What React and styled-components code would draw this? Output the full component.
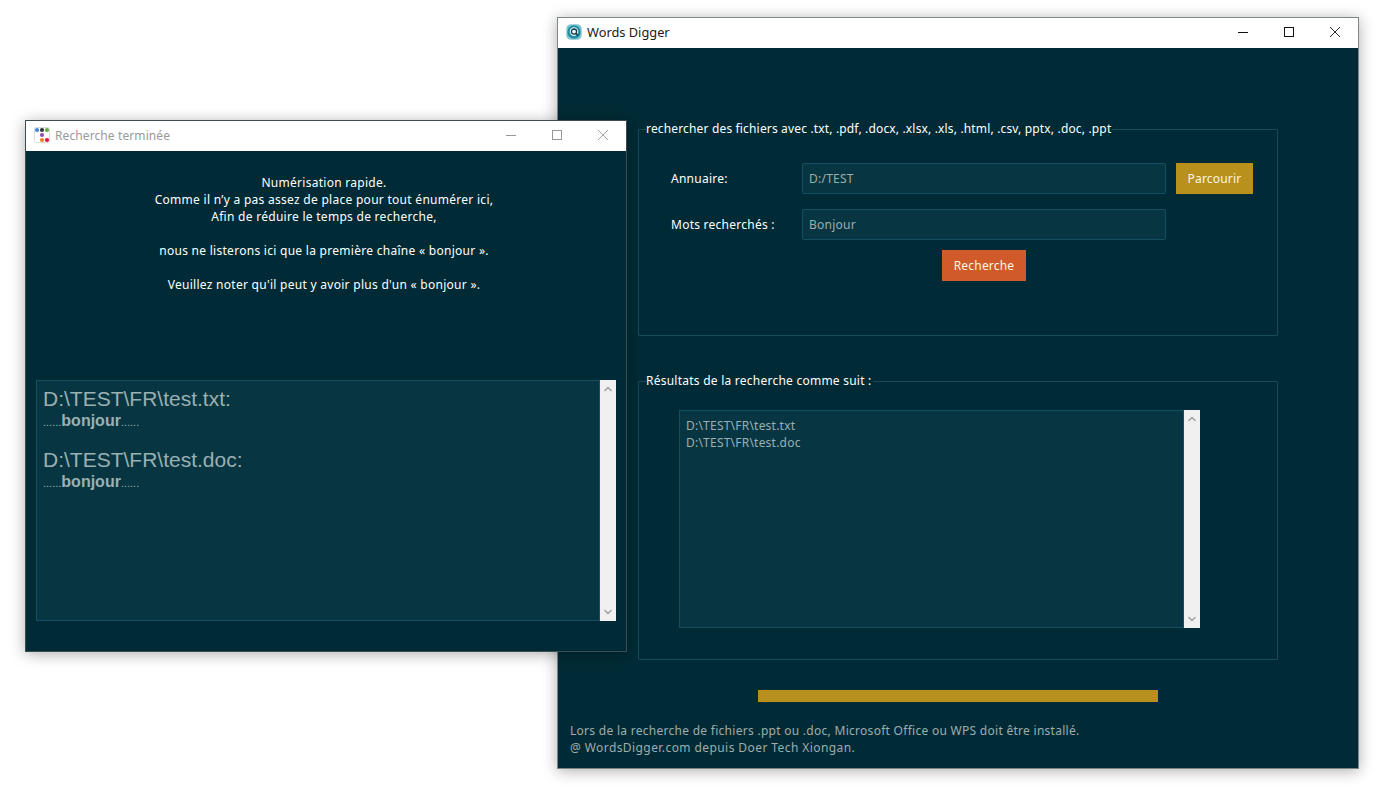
import styled, { createGlobalStyle } from "styled-components";
import { ChevronUp, ChevronDown } from "lucide-react";

const GlobalStyle = createGlobalStyle`
  html, body {
    margin: 0;
    background: #fff;
    overflow: hidden;
  }
  * {
    box-sizing: border-box;
  }
`;

const Desktop = styled.div`
  position: relative;
  width: 1384px;
  height: 789px;
  font-family: "Noto Sans", "Noto Sans CJK SC", sans-serif;
  font-size: 12px;
`;

// windows sit on a free desktop, so these are the only absolute parts
const Window = styled.div`
  position: absolute;
  left: ${(p) => p.$x}px;
  top: ${(p) => p.$y}px;
  width: ${(p) => p.$w}px;
  height: ${(p) => p.$h}px;
  display: flex;
  flex-direction: column;
  border: 1px solid ${(p) => p.$edge};
  box-shadow: 0 2px 14px rgba(0, 0, 0, 0.32);
`;

const TitleBar = styled.div`
  height: 30px;
  flex: none;
  display: flex;
  align-items: center;
  background: #fff;
  padding: 0 0 2px 8px;
  color: ${(p) => (p.$dim ? "#999999" : "#1a1a1a")};
  font-size: ${(p) => (p.$dim ? "12px" : "12.8px")};
  letter-spacing: ${(p) => (p.$dim ? "0.1px" : "0")};
`;

const TitleText = styled.span`
  margin-left: 5px;
  flex: 1;
`;

const WinBtn = styled.div`
  width: 46px;
  height: 28px;
  display: flex;
  align-items: center;
  justify-content: center;
  color: ${(p) => (p.$dim ? "#999999" : "#111111")};
`;

const Body = styled.div`
  flex: 1;
  background: #002b36;
  display: flex;
  flex-direction: column;
`;

const MainBody = styled(Body)`
  padding: 72px 80px 0 80px;
`;

const Group = styled.fieldset`
  margin: 0 0 ${(p) => p.$after || 0}px;
  padding: 0;
  width: 640px;
  height: ${(p) => p.$h}px;
  border: 1px solid #174b5a;
  border-radius: 1px;
`;

const GroupTitle = styled.legend`
  margin-left: 7px;
  padding: 0 1px 2px 0;
  color: #ffffff;
  font-size: 12px;
  line-height: 17px;
  letter-spacing: ${(p) => p.$track}px;
`;

const FormGrid = styled.div`
  display: grid;
  grid-template-columns: 131px 364px 77px;
  grid-auto-rows: 31px;
  column-gap: 0;
  row-gap: 15px;
  padding: 24px 0 0 32px;
  align-items: center;
`;

const Label = styled.div`
  color: #ffffff;
  font-size: 12px;
  letter-spacing: 0.25px;
`;

const Field = styled.div`
  height: 31px;
  line-height: 29px;
  padding-left: 6px;
  background: #073642;
  border: 1px solid #12505f;
  border-radius: 2px;
  color: #9fadad;
  font-size: 12px;
  letter-spacing: 0.25px;
`;

const Button = styled.div`
  height: 31px;
  display: flex;
  align-items: center;
  justify-content: center;
  width: ${(p) => p.$w}px;
  background: ${(p) => p.$bg};
  color: #fdf6e3;
  font-size: 12px;
  letter-spacing: 0.2px;
`;

const BrowseButton = styled(Button)`
  margin-left: 10px;
`;

const SearchRow = styled.div`
  display: flex;
  justify-content: center;
  margin: 10px 0 0 52px;
`;

const ListFrame = styled.div`
  display: flex;
  height: ${(p) => p.$h}px;
  margin: ${(p) => p.$margin};
`;

const ListBox = styled.div`
  flex: 1;
  background: #073642;
  border: 1px solid #12505f;
  color: #9ab0b2;
  padding: ${(p) => p.$pad};
  font-size: 12px;
  line-height: 17px;
  letter-spacing: 0.22px;
`;

const ScrollBar = styled.div`
  width: 16px;
  flex: none;
  background: #f0f0f0;
  color: #a3a3a3;
  display: flex;
  flex-direction: column;
  justify-content: space-between;
  align-items: center;
  padding: 3px 0;
`;

const Progress = styled.div`
  width: 400px;
  height: 12px;
  flex: none;
  margin: 30px 0 0 120px;
  background: #b8901c;
`;

const Footer = styled.div`
  margin: 20px 0 0 -68px;
  color: #9fadad;
  font-size: 12px;
  line-height: 17px;
  white-space: nowrap;
`;

const FooterLine = styled.div`
  letter-spacing: ${(p) => p.$track}px;
`;

const Notice = styled.div`
  padding: 23px 4px 0 0;
  height: 229px;
  flex: none;
  text-align: center;
  color: #ffffff;
  font-size: 12px;
  line-height: 17px;
  letter-spacing: 0.28px;
  white-space: pre-line;
`;

const ResultTitle = styled.div`
  font-family: "Liberation Sans", Arial, sans-serif;
  font-size: 21px;
  line-height: 24px;
  letter-spacing: 0;
`;

const ResultLine = styled.div`
  font-family: "Liberation Sans", Arial, sans-serif;
  font-size: 11px;
  line-height: 16px;
  letter-spacing: 0;
  padding-top: 2px;
  margin-bottom: 18px;
  b {
    font-size: 16px;
  }
`;

const WordsDiggerIcon = () => (
  <svg width="16" height="16" viewBox="0 0 16 16">
    <rect x="0.3" y="0.3" width="15.4" height="15.4" rx="4.5" fill="#86c6d1" />
    <circle cx="8" cy="8" r="6.7" fill="#1d8ea3" />
    <circle cx="8" cy="7.6" r="4.3" fill="#e9f4f6" />
    <circle cx="8" cy="7.6" r="2.6" fill="none" stroke="#123f4d" strokeWidth="1.3" />
    <path d="M9.8 9.4l2.4 2.2" stroke="#123f4d" strokeWidth="1.5" />
  </svg>
);

const dots = [
  [3, 3, "#3f87d9"],
  [8, 3, "#333333"],
  [13, 3, "#5fae3c"],
  [8, 8, "#8e4fb0"],
  [8, 13, "#ef7d22"],
  [13, 13, "#e2173f"],
];

const ColorDotsIcon = () => (
  <svg width="16" height="16" viewBox="0 0 16 16">
    <rect x="0.5" y="0.5" width="15" height="15" rx="1" fill="#fff" stroke="#dddddd" />
    {dots.map(([cx, cy, fill]) => (
      <circle key={`${cx}-${cy}`} cx={cx} cy={cy} r="2.1" fill={fill} />
    ))}
  </svg>
);

const WindowButtons = ({ dim }) => (
  <>
    <WinBtn $dim={dim}>
      <svg width="10" height="10" viewBox="0 0 10 10">
        <path d="M0 5.5h10" stroke="currentColor" fill="none" />
      </svg>
    </WinBtn>
    <WinBtn $dim={dim}>
      <svg width="10" height="10" viewBox="0 0 10 10">
        <rect x="0.5" y="0.5" width="9" height="9" stroke="currentColor" fill="none" />
      </svg>
    </WinBtn>
    <WinBtn $dim={dim}>
      <svg width="10" height="10" viewBox="0 0 10 10">
        <path d="M0 0l10 10M10 0L0 10" stroke="currentColor" strokeWidth="0.9" fill="none" />
      </svg>
    </WinBtn>
  </>
);

const Scroll = () => (
  <ScrollBar>
    <ChevronUp size={12} strokeWidth={3} />
    <ChevronDown size={12} strokeWidth={3} />
  </ScrollBar>
);

const results = ["D:\\TEST\\FR\\test.txt:", "D:\\TEST\\FR\\test.doc:"];

export default function App() {
  return (
    <Desktop>
      <GlobalStyle />
      <Window $x={557} $y={17} $w={802} $h={752} $edge="#7d8587">
        <TitleBar>
          <WordsDiggerIcon />
          <TitleText>Words Digger</TitleText>
          <WindowButtons />
        </TitleBar>
        <MainBody>
          <Group $h={216} $after={36}>
            <GroupTitle $track={0.16}>
              rechercher des fichiers avec .txt, .pdf, .docx, .xlsx, .xls, .html, .csv, pptx, .doc, .ppt
            </GroupTitle>
            <FormGrid>
              <Label>Annuaire:</Label>
              <Field>D:/TEST</Field>
              <BrowseButton $w={77} $bg="#b8901c">Parcourir</BrowseButton>
              <Label>Mots recherchés :</Label>
              <Field>Bonjour</Field>
            </FormGrid>
            <SearchRow>
              <Button $w={84} $bg="#d05a2a">Recherche</Button>
            </SearchRow>
          </Group>
          <Group $h={288}>
            <GroupTitle $track={0.24}>Résultats de la recherche comme suit :</GroupTitle>
            <ListFrame $h={218} $margin="19px 77px 0 40px">
              <ListBox $pad="6px 6px">
                D:\TEST\FR\test.txt
                <br />
                D:\TEST\FR\test.doc
              </ListBox>
              <Scroll />
            </ListFrame>
          </Group>
          <Progress />
          <Footer>
            <FooterLine $track={0.28}>
              Lors de la recherche de fichiers .ppt ou .doc, Microsoft Office ou WPS doit être installé.
            </FooterLine>
            <FooterLine $track={0.42}>@ WordsDigger.com depuis Doer Tech Xiongan.</FooterLine>
          </Footer>
        </MainBody>
      </Window>

      <Window $x={25} $y={120} $w={602} $h={532} $edge="#3c4d52">
        <TitleBar $dim>
          <ColorDotsIcon />
          <TitleText>Recherche terminée</TitleText>
          <WindowButtons dim />
        </TitleBar>
        <Body>
          <Notice>
            {`Numérisation rapide.
Comme il n’y a pas assez de place pour tout énumérer ici,
Afin de réduire le temps de recherche,

nous ne listerons ici que la première chaîne « bonjour ».

Veuillez noter qu'il peut y avoir plus d'un « bonjour ».`}
          </Notice>
          <ListFrame $h={241} $margin="0 10px 0 10px">
            <ListBox $pad="6px 6px">
              {results.map((path) => (
                <div key={path}>
                  <ResultTitle>{path}</ResultTitle>
                  <ResultLine>
                    ......<b>bonjour</b>......
                  </ResultLine>
                </div>
              ))}
            </ListBox>
            <Scroll />
          </ListFrame>
        </Body>
      </Window>
    </Desktop>
  );
}
